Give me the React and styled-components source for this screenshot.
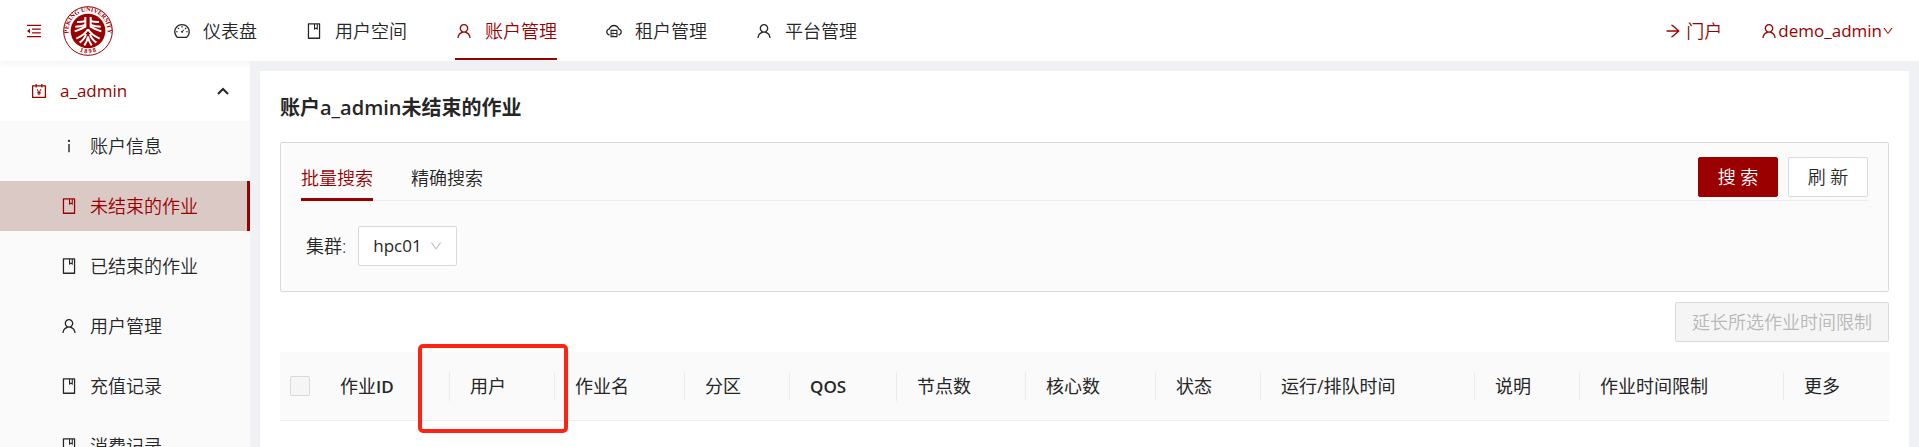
import React from "react";
import styled, { createGlobalStyle, css } from "styled-components";
import {
  AiOutlineAccountBook,
  AiOutlineArrowRight,
  AiOutlineBook,
  AiOutlineCloudServer,
  AiOutlineDashboard,
  AiOutlineDown,
  AiOutlineInfo,
  AiOutlineMenuFold,
  AiOutlineUser,
} from "react-icons/ai";

const primary = "#9b0000";
const line = "#d9d9d9";
const faint = "#ececec";

const GlobalStyle = createGlobalStyle`
  *, *::before, *::after { box-sizing: border-box; }
  body {
    margin: 0;
    background: #f0f1f5;
    color: #262626;
    font-family: "Open Sans", "Noto Sans CJK SC", sans-serif;
    font-size: 18px;
    font-weight: 350;
    line-height: 28px;
  }
  button, input, select { font: inherit; color: inherit; }
  a { color: inherit; text-decoration: none; }
  svg { flex: none; display: block; }
`;

const Layout = styled.div`
  display: flex;
  flex-direction: column;
  height: 100vh;
  overflow: hidden;
`;

const Header = styled.header`
  position: relative;
  z-index: 1;
  flex: none;
  display: flex;
  align-items: center;
  height: 61px;
  padding: 0 25px;
  background: #fff;
  box-shadow: 0 2px 8px #f0f1f2;
`;

const FoldButton = styled.button`
  display: flex;
  padding: 0;
  margin-right: 20px;
  border: 0;
  background: none;
  color: ${primary};
  cursor: pointer;
`;

const TopNav = styled.nav`
  flex: 1;
  display: flex;
  gap: 48px;
  height: 100%;
  margin-left: 60px;
`;

const TopLink = styled.a`
  display: flex;
  align-items: center;
  gap: 12px;
  height: 60px;
  border-top: 4px solid transparent;
  border-bottom: 2px solid ${(p) => (p.$active ? primary : "transparent")};
  color: ${(p) => (p.$active ? primary : "inherit")};
`;

const UserArea = styled.div`
  display: flex;
  align-items: center;
  gap: 38px;
  color: ${primary};
`;

const PortalLink = styled.a`
  display: flex;
  align-items: center;
  gap: 4px;
`;

const UserButton = styled.button`
  display: flex;
  align-items: center;
  padding: 0;
  border: 0;
  background: none;
  font-size: 17px;
  font-weight: 400;
  cursor: pointer;
`;

const Body = styled.div`
  flex: 1;
  display: flex;
  min-height: 0;
`;

const Sidebar = styled.aside`
  flex: none;
  width: 250px;
  background: #fff;
`;

const GroupButton = styled.button`
  display: flex;
  align-items: center;
  gap: 12px;
  width: 100%;
  height: 60px;
  padding: 0 21px 0 30px;
  border: 0;
  background: none;
  color: ${primary};
  font-size: 17px;
  font-weight: 400;
  text-align: left;
  cursor: pointer;

  span { flex: 1; }
`;

const SubMenu = styled.nav`
  display: flex;
  flex-direction: column;
  gap: 10px;
  background: #fafafa;
`;

const SubLink = styled.a`
  display: flex;
  align-items: center;
  gap: 12px;
  height: 50px;
  padding-left: 60px;
  border-right: 3px solid transparent;
  ${(p) =>
    p.$active &&
    css`
      border-right-color: ${primary};
      background: #dbc9c6;
      color: ${primary};
    `}
`;

const Main = styled.main`
  flex: 1;
  min-width: 0;
  margin: 10px 10px 0;
  padding: 20px;
  background: #fff;
`;

const Title = styled.h1`
  margin: 0 0 17px;
  font-size: 20px;
  font-weight: 600;
  line-height: 34px;
`;

const SearchBox = styled.section`
  height: 150px;
  padding: 14px 20px;
  border: 1px solid ${line};
  border-radius: 2px;
  background: #fbfbfb;
`;

const TabBar = styled.div`
  display: flex;
  align-items: flex-start;
  height: 44px;
  border-bottom: 1px solid ${faint};
`;

const Tabs = styled.div`
  flex: 1;
  display: flex;
  gap: 38px;
`;

const Tab = styled.button`
  height: 44px;
  padding: 0;
  border: 0;
  border-bottom: 3px solid ${(p) => (p.$active ? primary : "transparent")};
  background: none;
  color: ${(p) => (p.$active ? primary : "inherit")};
  cursor: pointer;
`;

const Actions = styled.div`
  display: flex;
  gap: 10px;
`;

const Button = styled.button`
  height: 40px;
  min-width: 80px;
  padding: 0 16px;
  border: 1px solid ${(p) => (p.$primary ? primary : line)};
  border-radius: 2px;
  background: ${(p) => (p.$primary ? primary : "#fff")};
  color: ${(p) => (p.$primary ? "#fff" : "inherit")};
  white-space: nowrap;
  cursor: pointer;

  &:disabled {
    background: #f5f5f5;
    color: #b8b8b8;
    cursor: not-allowed;
  }
`;

const Field = styled.div`
  display: flex;
  align-items: center;
  gap: 12px;
  margin-top: 25px;
  padding-left: 5px;
`;

const SelectWrap = styled.div`
  display: grid;
  align-items: center;
  width: 99px;

  select, svg { grid-area: 1 / 1; }
  svg {
    justify-self: end;
    margin-right: 14px;
    color: #bfbfbf;
    pointer-events: none;
  }
`;

const Select = styled.select`
  appearance: none;
  width: 100%;
  height: 40px;
  padding: 0 14px;
  border: 1px solid ${line};
  border-radius: 2px;
  background: #fff;
  font-size: 17px;
  font-weight: 400;
`;

const Toolbar = styled.div`
  display: flex;
  justify-content: flex-end;
  margin: 10px 0;
`;

const Table = styled.table`
  width: 100%;
  table-layout: fixed;
  border-collapse: separate;
  border-spacing: 0;
`;

const HeadCell = styled.th`
  position: relative;
  height: 69px;
  padding: 0;
  border-bottom: 1px solid ${faint};
  background: #fafafa;
  font-weight: 400;
  text-align: left;
  white-space: nowrap;
`;

const HeadLabel = styled.div`
  padding-left: 20px;
  border-right: 1px solid ${(p) => (p.$last ? "transparent" : "#ebebeb")};
`;

const Latin = styled.span`
  font-size: 17px;
  font-weight: 600;
`;

const HeadCheck = styled.input`
  appearance: none;
  display: block;
  width: 20px;
  height: 20px;
  margin: 0 10px;
  border: 1px solid ${line};
  border-radius: 2px;
  background: #f5f5f5;
`;

const Marker = styled.div`
  position: absolute;
  z-index: 1;
  top: -8px;
  left: -32px;
  width: 150px;
  height: 89px;
  border: 4px solid #ff2314;
  border-radius: 5px;
  pointer-events: none;
`;

function Logo() {
  return (
    <svg width="50" height="50" viewBox="0 0 150 150" role="img" aria-label="Peking University">
      <defs>
        <path id="ringTop" d="M 20.6 98 A 59 59 0 1 1 129.4 98" />
        <path id="ringBottom" d="M 36 129 A 66 66 0 0 0 114 129" />
      </defs>
      <circle cx="75" cy="75" r="73" fill="#fff" stroke={primary} strokeWidth="3" />
      <circle cx="75" cy="75" r="52" fill={primary} />
      <g fill={primary} fontFamily="Liberation Serif, serif" fontWeight="700" fontSize="19">
        <text>
          <textPath href="#ringTop" startOffset="50%" textAnchor="middle">PEKING UNIVERSITY</textPath>
        </text>
        <text>
          <textPath href="#ringBottom" startOffset="50%" textAnchor="middle">1 8 9 8</textPath>
        </text>
      </g>
      <g fill="none" stroke="#fff" strokeWidth="6" strokeLinejoin="round">
        <path d="M67 33V62Q55 70 35 76" />
        <path d="M83 33V62Q95 70 115 76" />
        <path d="M67 45Q55 49 42 48" />
        <path d="M83 45Q95 49 108 48" />
        <path d="M67 57Q52 62 37 62" />
        <path d="M83 57Q98 62 113 62" />
        <path d="M75 70Q66 86 40 98" />
        <path d="M75 70Q84 86 110 98" />
        <path d="M69 84Q66 98 50 110" />
        <path d="M81 84Q84 98 100 110" />
        <path d="M75 92Q73 106 64 118" />
        <path d="M75 92Q77 106 86 118" />
      </g>
    </svg>
  );
}

function ChevronUp() {
  return (
    <svg width="12" height="8" viewBox="0 0 12 8" fill="none" stroke="#262626" strokeWidth="2">
      <path d="M1 7L6 2L11 7" />
    </svg>
  );
}

const topItems = [
  ["仪表盘", AiOutlineDashboard],
  ["用户空间", AiOutlineBook],
  ["账户管理", AiOutlineUser],
  ["租户管理", AiOutlineCloudServer],
  ["平台管理", AiOutlineUser],
];

const sideItems = [
  ["账户信息", AiOutlineInfo],
  ["未结束的作业", AiOutlineBook],
  ["已结束的作业", AiOutlineBook],
  ["用户管理", AiOutlineUser],
  ["充值记录", AiOutlineBook],
  ["消费记录", AiOutlineBook],
];

const columns = [
  { key: "id", label: <>作业<Latin>ID</Latin></>, width: 130 },
  { key: "user", label: "用户", width: 105, marked: true },
  { key: "name", label: "作业名", width: 130 },
  { key: "partition", label: "分区", width: 105 },
  { key: "qos", label: <Latin>QOS</Latin>, width: 107 },
  { key: "nodes", label: "节点数", width: 129 },
  { key: "cores", label: "核心数", width: 130 },
  { key: "state", label: "状态", width: 105 },
  { key: "time", label: "运行/排队时间", width: 214 },
  { key: "reason", label: "说明", width: 105 },
  { key: "limit", label: "作业时间限制", width: 204 },
  { key: "more", label: "更多", width: 105 },
];

export default function App() {
  return (
    <Layout>
      <GlobalStyle />
      <Header>
        <FoldButton aria-label="收起菜单">
          <AiOutlineMenuFold size={18} />
        </FoldButton>
        <Logo />
        <TopNav>
          {topItems.map(([label, Icon]) => (
            <TopLink key={label} href="#" $active={label === "账户管理"}>
              <Icon size={18} />
              {label}
            </TopLink>
          ))}
        </TopNav>
        <UserArea>
          <PortalLink href="#">
            <AiOutlineArrowRight size={18} />
            门户
          </PortalLink>
          <UserButton>
            <AiOutlineUser size={18} />
            demo_admin
            <AiOutlineDown size={12} />
          </UserButton>
        </UserArea>
      </Header>
      <Body>
        <Sidebar>
          <GroupButton aria-expanded="true">
            <AiOutlineAccountBook size={18} />
            <span>a_admin</span>
            <ChevronUp />
          </GroupButton>
          <SubMenu>
            {sideItems.map(([label, Icon]) => (
              <SubLink key={label} href="#" $active={label === "未结束的作业"}>
                <Icon size={18} />
                {label}
              </SubLink>
            ))}
          </SubMenu>
        </Sidebar>
        <Main>
          <Title>账户a_admin未结束的作业</Title>
          <SearchBox>
            <TabBar>
              <Tabs role="tablist">
                <Tab role="tab" aria-selected="true" $active>批量搜索</Tab>
                <Tab role="tab" aria-selected="false">精确搜索</Tab>
              </Tabs>
              <Actions>
                <Button $primary>搜 索</Button>
                <Button>刷 新</Button>
              </Actions>
            </TabBar>
            <Field>
              <label htmlFor="cluster">集群:</label>
              <SelectWrap>
                <Select id="cluster" defaultValue="hpc01">
                  <option value="hpc01">hpc01</option>
                </Select>
                <AiOutlineDown size={14} />
              </SelectWrap>
            </Field>
          </SearchBox>
          <Toolbar>
            <Button disabled>延长所选作业时间限制</Button>
          </Toolbar>
          <Table>
            <colgroup>
              <col width="40" />
              {columns.map((column) => (
                <col key={column.key} width={column.width} />
              ))}
            </colgroup>
            <thead>
              <tr>
                <HeadCell scope="col">
                  <HeadCheck type="checkbox" aria-label="全选" disabled />
                </HeadCell>
                {columns.map((column, i) => (
                  <HeadCell key={column.key} scope="col">
                    <HeadLabel $last={i === columns.length - 1}>{column.label}</HeadLabel>
                    {column.marked && <Marker />}
                  </HeadCell>
                ))}
              </tr>
            </thead>
          </Table>
        </Main>
      </Body>
    </Layout>
  );
}
